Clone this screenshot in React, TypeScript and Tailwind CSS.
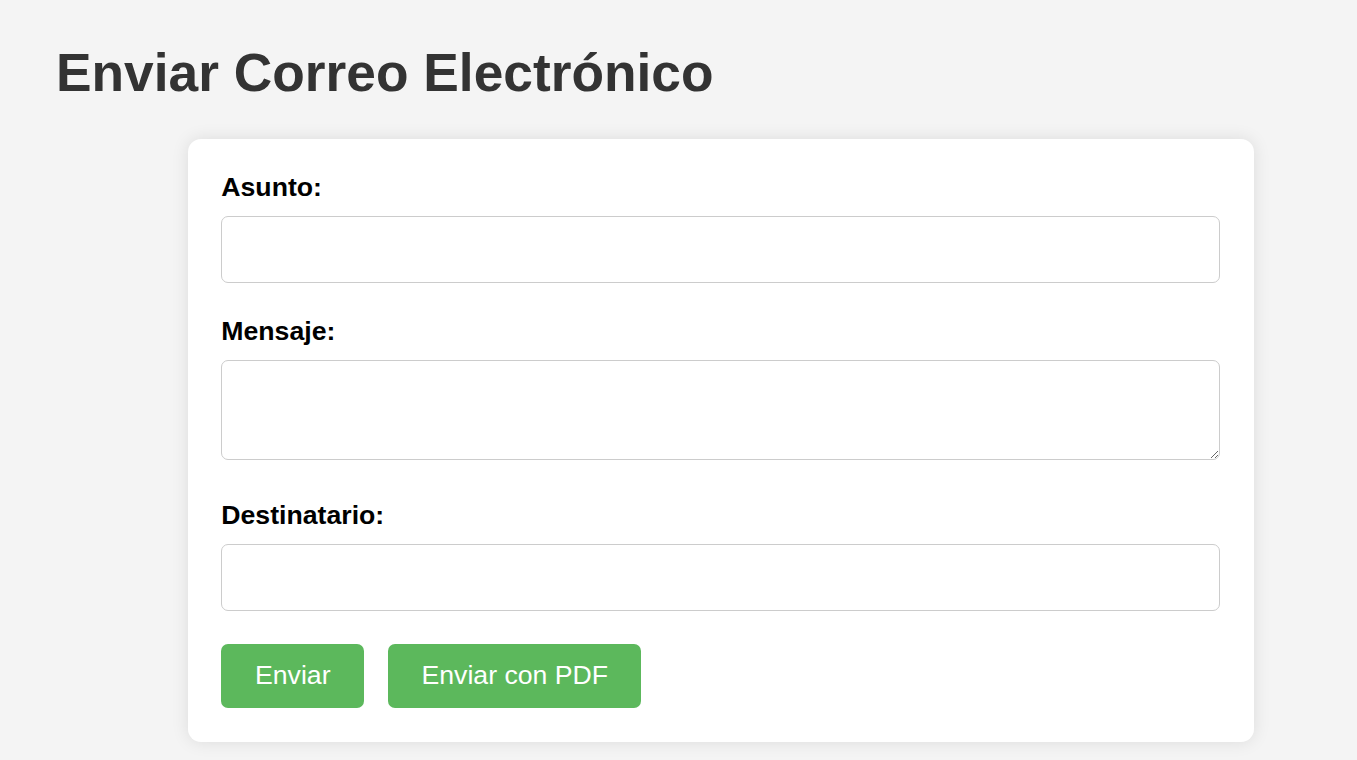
import React from "react";

export default function App() {
  return (
    <div
      className="min-h-[760px] w-full bg-[#f4f4f4] pt-[42px] pl-[52px]"
      style={{ fontFamily: '"Liberation Sans", Arial, sans-serif' }}
    >
      <h1 className="m-0 pl-[4px] text-[53.3px] leading-[61.3px] font-bold text-[#333]">
        Enviar Correo Electrónico
      </h1>
      <div className="mt-[35.7px] ml-[136px] w-[1066px] rounded-[13px] bg-white px-[33.3px] pt-[33.3px] pb-[34.3px] shadow-[0_0_17px_rgba(0,0,0,0.1)]">
        <label className="block text-[26.67px] leading-[30.6px] font-bold text-black">
          Asunto:
        </label>
        <input
          type="text"
          className="mt-[13.3px] block h-[67px] w-[999px] rounded-[7px] border border-[#ccc] bg-white px-[16px] text-[22px] outline-none"
        />
        <label className="mt-[33.3px] block text-[26.67px] leading-[30.6px] font-bold text-black">
          Mensaje:
        </label>
        <textarea className="mt-[13.3px] block h-[100px] w-[999px] rounded-[7px] border border-[#ccc] bg-white px-[16px] text-[22px] outline-none" />
        <label className="mt-[40px] block text-[26.67px] leading-[30.6px] font-bold text-black">
          Destinatario:
        </label>
        <input
          type="text"
          className="mt-[13.3px] block h-[67px] w-[999px] rounded-[7px] border border-[#ccc] bg-white px-[16px] text-[22px] outline-none"
        />
        <div className="mt-[32.5px] flex gap-[24px]">
          <button className="h-[64px] w-[143px] rounded-[7px] bg-[#5cb85c] text-[26.67px] leading-[30.6px] text-white">
            Enviar
          </button>
          <button className="h-[64px] w-[253px] rounded-[7px] bg-[#5cb85c] text-[26.67px] leading-[30.6px] text-white">
            Enviar con PDF
          </button>
        </div>
      </div>
    </div>
  );
}
